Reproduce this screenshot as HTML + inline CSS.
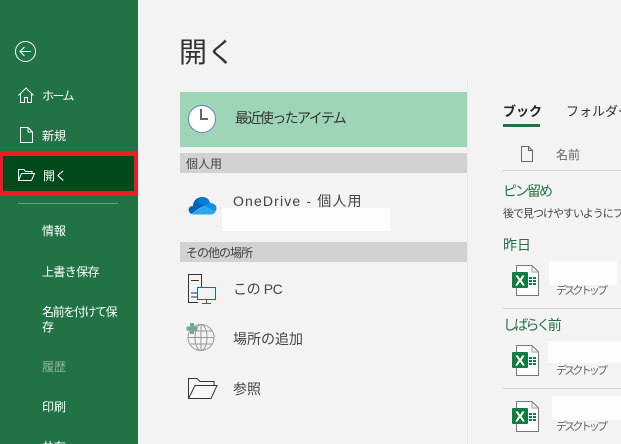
<!DOCTYPE html>
<html lang="ja"><head><meta charset="utf-8"><style>
html,body{margin:0;padding:0;height:444px;overflow:hidden}
body{width:621px;background:#f3f3f3;position:relative;font-family:"Liberation Sans","Noto Sans CJK JP",sans-serif}
.t{position:absolute;white-space:nowrap;line-height:20px;height:20px}
.b{position:absolute}
.s{color:#fff;font-size:12px;left:42px}
.m{color:#333;font-size:14px;left:233px}
.h{color:#444;font-size:12px;left:186px}
.g{color:#217346;font-size:14px;left:503px}
.d{color:#666;font-size:11px;left:556px;letter-spacing:-2.8px}
svg{position:absolute;overflow:visible}
</style></head><body>
<div class="b" style="left:0;top:0;width:138px;height:444px;background:#217346"></div>
<svg style="left:15px;top:41px" width="21" height="21" fill="none" stroke="#fff"><circle cx="10.5" cy="10.5" r="10"/><path d="M5 10.5H16M9.5 6L5 10.5L9.5 15"/></svg>
<svg style="left:18px;top:87px" width="16" height="16" fill="none" stroke="#fff"><path d="M.5 8.5L8 1L15.500 8.500M2.500 7V15.500H6.500V10.500H9.500V15.500H13.500V7"/></svg>
<svg style="left:20px;top:127px" width="13" height="16" fill="none" stroke="#fff"><path d="M.5.5H8L12.500 5V15.500H.5ZM8 .5V5H12.500"/></svg>
<div class="t s" style="top:86px;letter-spacing:-1.6px">ホーム</div>
<div class="t s" style="top:126px">新規</div>
<div class="b" style="left:0;top:151px;width:138px;height:45px;box-sizing:border-box;border:solid #ed1c24;border-width:5px 4px 5px 3px;background:#024a1b"></div>
<svg style="left:18px;top:169px" width="17" height="12" fill="none" stroke="#fff"><path d="M.5 11.500V.5H6L7.500 2.500H14V4.500M.5 11.500L3.500 4.500H16.500L13.500 11.500Z"/></svg>
<div class="t s" style="top:166px;left:43px">開く</div>
<div class="b" style="left:18px;top:203px;width:100px;height:1px;background:#5fa57f"></div>
<div class="t s" style="top:221px">情報</div>
<div class="t s" style="top:262px;letter-spacing:-.6px">上書き保存</div>
<div class="t s" style="top:302px;letter-spacing:-1.4px">名前を付けて保</div>
<div class="t s" style="top:317px">存</div>
<div class="t s" style="top:357px;color:#8fb5a0">履歴</div>
<div class="t s" style="top:397px">印刷</div>
<div class="t s" style="top:437px">共有</div>

<div class="t" style="left:179px;top:35px;font-size:28px;line-height:36px;height:36px;color:#333">開く</div>
<div class="b" style="left:467px;top:80px;width:1px;height:364px;background:#eaeaea"></div>

<div class="b" style="left:180px;top:92px;width:287px;height:55px;background:#9fd5b7"></div>
<svg style="left:188px;top:105px" width="28" height="28"><circle cx="14" cy="14" r="13.500" fill="#fff" stroke="#5b86b8"/><path d="M13 4V14H20" fill="none" stroke="#666" stroke-width="2"/></svg>
<div class="t m" style="left:235px;top:108px;color:#333;letter-spacing:-1.6px">最近使ったアイテム</div>
<div class="b" style="left:180px;top:153px;width:287px;height:20px;background:#d2d2d2"></div>
<div class="t h" style="top:154px">個人用</div>
<svg style="left:188px;top:196px" width="29" height="19"><path d="M5 10C5 4 10 1 14 1C18 1 21 3 22 7L12 12L3 18C1 16 0 14 1 12C2 10.500 3 10 5 10Z" fill="#0364b8"/><path d="M9 5C11 2 13 1 14 1C18 1 21 3 22 7L16 10Z" fill="#0a78d4"/><path d="M22 7C26 7 28.500 9.500 28.500 12C28.500 13.500 28 14.500 27.500 15.500L16 10Z" fill="#1490df"/><path d="M16 10L27.500 15.500C26.500 17.500 25 18.500 23 18.500H7C5 18.500 4 18.500 3 18Z" fill="#28a8ea"/></svg>
<div class="t m" style="top:191px;letter-spacing:1.15px;color:#444">OneDrive - 個人用</div>
<div class="b" style="left:222px;top:208px;width:168px;height:23px;background:#fdfdfd"></div>
<div class="b" style="left:180px;top:242px;width:287px;height:20px;background:#d2d2d2"></div>
<div class="t h" style="top:243px;letter-spacing:-1px">その他の場所</div>
<svg style="left:188px;top:274px" width="29" height="30" fill="none"><path d="M10 28.500H.5V.5H13.500V13M3 6.500H11M3 19H9M3 23H9" stroke="#333"/><rect x="9.500" y="13.500" width="18" height="12" fill="#f3f3f3" stroke="#0a6cb5"/><path d="M18.500 25.500V29M14 29.500H23" stroke="#0a6cb5"/></svg>
<div class="t m" style="top:279px;letter-spacing:-.4px;color:#444">この PC</div>
<svg style="left:186px;top:322px" width="30" height="30" fill="none" stroke="#999"><circle cx="15" cy="15.500" r="13"/><ellipse cx="15" cy="15.500" rx="6" ry="13"/><path d="M2 15.500H28M4 9H26M4 22H26M15 2.500V28.500"/><path d="M6 1V12M.5 6.500H11.500" stroke="#76a896" stroke-width="4"/></svg>
<div class="t m" style="top:329px;color:#444">場所の追加</div>
<svg style="left:188px;top:378px" width="30" height="21" fill="none" stroke="#333"><path d="M.5 20V.5H9L12 3.500H26V7M.5 20.500L7 7.500H29L23 20.500Z" fill="#f7f7f7"/></svg>
<div class="t m" style="top:379px;color:#444">参照</div>

<div class="t" style="left:503px;top:102px;font-size:13px;font-weight:700;color:#222">ブック</div>
<div class="b" style="left:503px;top:124px;width:37px;height:3px;background:#217346"></div>
<div class="t" style="left:566px;top:102px;font-size:13px;color:#333">フォルダー</div>
<svg style="left:521px;top:146px" width="12" height="16" fill="none" stroke="#666"><path d="M.5.5H7.500L11.500 4.500V15.500H.5ZM7.500.5V4.500H11.500"/></svg>
<div class="t" style="left:556px;top:145px;font-size:12px;color:#666">名前</div>
<div class="b" style="left:503px;top:170px;width:118px;height:1px;background:#d4d4d4"></div>
<div class="t g" style="top:181px;letter-spacing:-2px">ピン留め</div>
<div class="t" style="left:503px;top:204px;font-size:11px;letter-spacing:-1px;color:#444">後で見つけやすいようにフ</div>
<div class="t g" style="top:235px">昨日</div>
<div class="b" style="left:549px;top:261px;width:68px;height:24px;background:#fdfdfd"></div>
<div class="t d" style="top:281px">デスクトップ</div>
<svg style="left:512px;top:265px" width="28" height="31"><path d="M4.500.5H20L26.500 7V30.500H4.500Z" fill="#fdfdfd" stroke="#777"/><path d="M20 .5V7H26.500" fill="none" stroke="#999"/><rect y="7" width="16" height="16" rx="1" fill="#107c41"/><text x="8" y="20.500" font-size="15" font-weight="700" fill="#fff" text-anchor="middle" font-family="Liberation Sans">X</text><path d="M17 12H20V14H17ZM21 12H24V14H21ZM17 15H20V17H17ZM21 15H24V17H21ZM17 18H20V20H17ZM21 18H24V20H21Z" fill="#107c41"/></svg>
<div class="b" style="left:503px;top:308px;width:118px;height:1px;background:#d4d4d4"></div>
<div class="t g" style="top:315px;letter-spacing:-2.8px">しばらく前</div>
<div class="b" style="left:548px;top:341px;width:73px;height:22px;background:#fdfdfd"></div>
<div class="t d" style="top:361px">デスクトップ</div>
<svg style="left:512px;top:345px" width="28" height="31"><path d="M4.500.5H20L26.500 7V30.500H4.500Z" fill="#fdfdfd" stroke="#777"/><path d="M20 .5V7H26.500" fill="none" stroke="#999"/><rect y="7" width="16" height="16" rx="1" fill="#107c41"/><text x="8" y="20.500" font-size="15" font-weight="700" fill="#fff" text-anchor="middle" font-family="Liberation Sans">X</text><path d="M17 12H20V14H17ZM21 12H24V14H21ZM17 15H20V17H17ZM21 15H24V17H21ZM17 18H20V20H17ZM21 18H24V20H21Z" fill="#107c41"/></svg>
<div class="b" style="left:503px;top:388px;width:118px;height:1px;background:#d4d4d4"></div>
<div class="b" style="left:552px;top:396px;width:69px;height:24px;background:#fdfdfd"></div>
<div class="t d" style="top:417px">デスクトップ</div>
<svg style="left:512px;top:401px" width="28" height="31"><path d="M4.500.5H20L26.500 7V30.500H4.500Z" fill="#fdfdfd" stroke="#777"/><path d="M20 .5V7H26.500" fill="none" stroke="#999"/><rect y="7" width="16" height="16" rx="1" fill="#107c41"/><text x="8" y="20.500" font-size="15" font-weight="700" fill="#fff" text-anchor="middle" font-family="Liberation Sans">X</text><path d="M17 12H20V14H17ZM21 12H24V14H21ZM17 15H20V17H17ZM21 15H24V17H21ZM17 18H20V20H17ZM21 18H24V20H21Z" fill="#107c41"/></svg>
</body></html>
